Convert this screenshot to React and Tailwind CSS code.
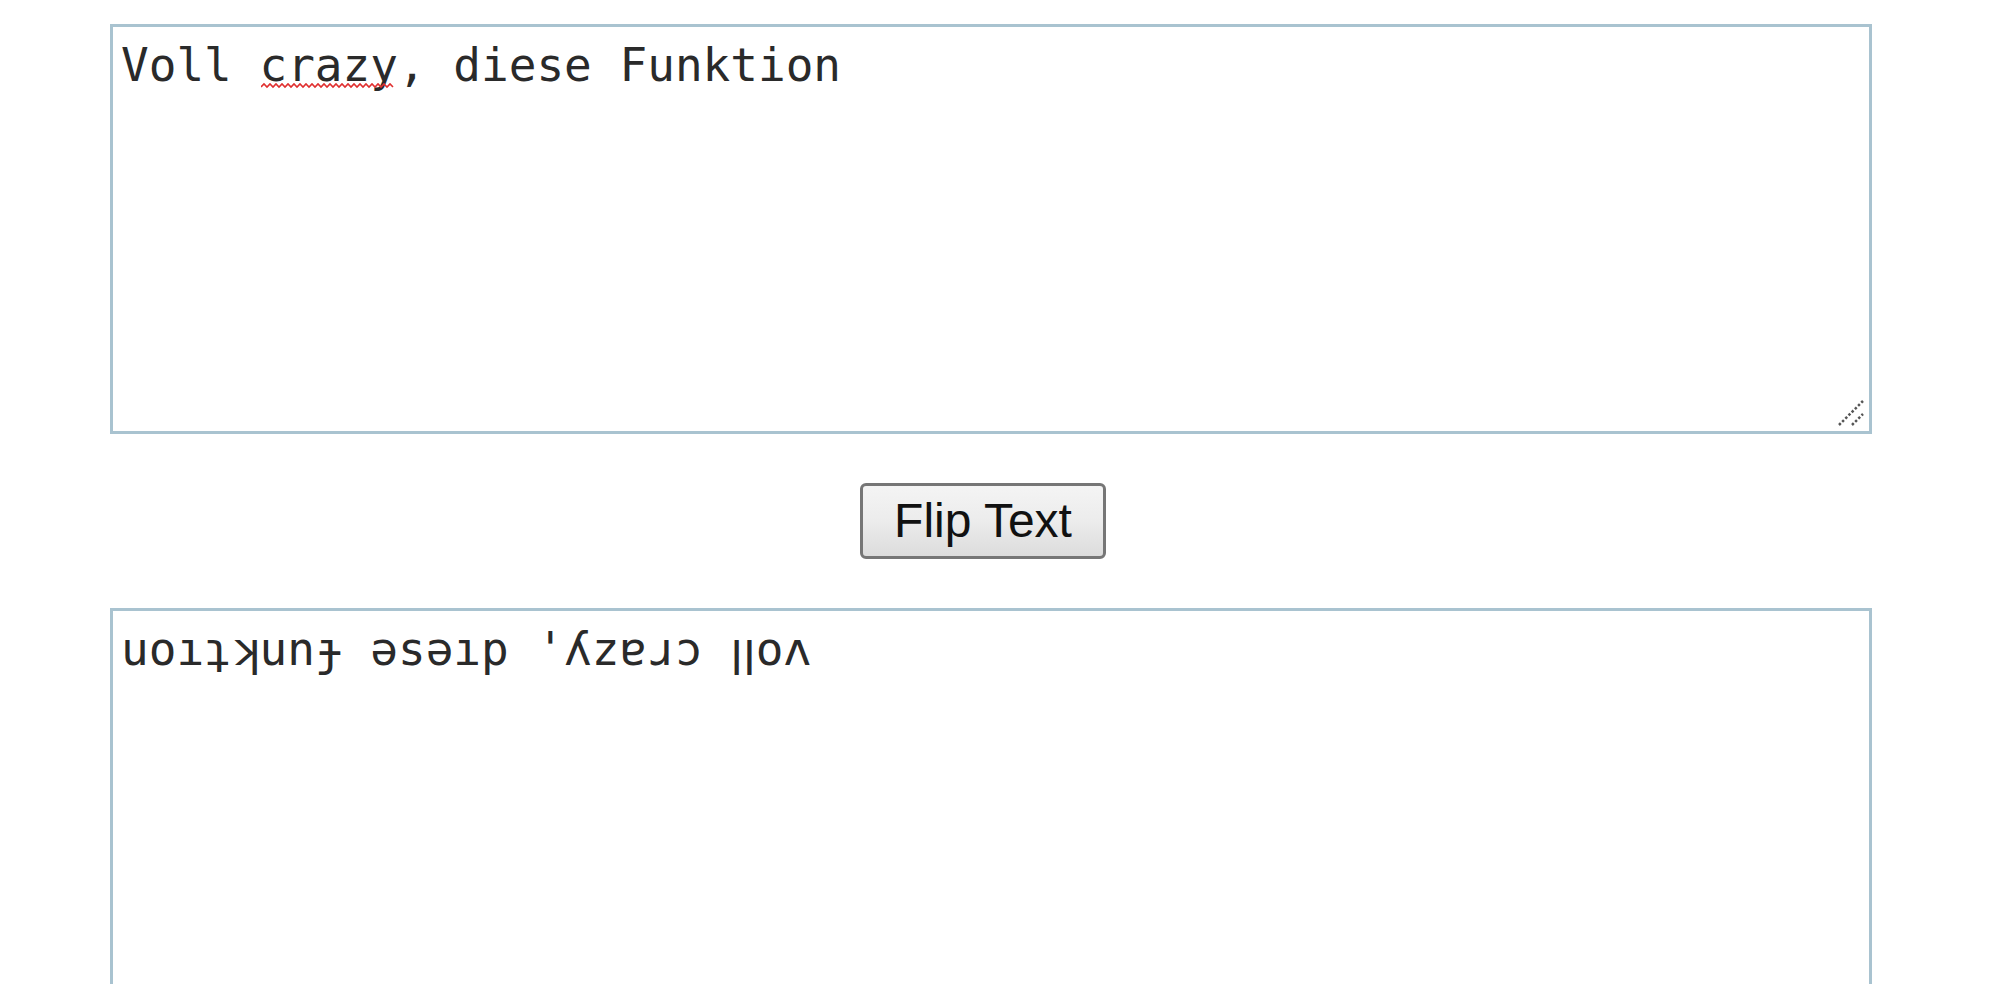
import React, { useState } from 'react';

const flipMap = {
  a: 'ɐ', b: 'q', c: 'ɔ', d: 'p', e: 'ǝ', f: 'ɟ', g: 'ƃ', h: 'ɥ', i: 'ı', j: 'ɾ',
  k: 'ʞ', l: 'ꞁ', m: 'ɯ', n: 'u', o: 'o', p: 'd', q: 'b', r: 'ɹ', s: 's', t: 'ʇ',
  u: 'n', v: 'ʌ', w: 'ʍ', x: 'x', y: 'ʎ', z: 'z', ',': "'", "'": ',', '.': '˙',
  '?': '¿', '!': '¡', '(': ')', ')': '(', '[': ']', ']': '[', '{': '}', '}': '{',
};

const flip = (text) =>
  text
    .toLowerCase()
    .split('')
    .reverse()
    .map((ch) => flipMap[ch] || ch)
    .join('');

// big dotted resize grip, like a zoomed-in browser draws it
const Grip = () => (
  <svg className="absolute right-[6px] bottom-[6px] pointer-events-none" width="30" height="30" viewBox="0 0 30 30">
    <line x1="3" y1="27" x2="27" y2="3" stroke="#555" strokeWidth="2.5" strokeDasharray="2.5 2" />
    <line x1="16" y1="27" x2="27" y2="16" stroke="#555" strokeWidth="2.5" strokeDasharray="2.5 2" />
  </svg>
);

// red spell-check squiggle under "crazy"
const Squiggle = () => (
  <svg className="absolute left-[151px] top-[58px] pointer-events-none" width="136" height="8" viewBox="0 0 136 8">
    <path
      d="M0 5 l3 -3 l3 3 l3 -3 l3 3 l3 -3 l3 3 l3 -3 l3 3 l3 -3 l3 3 l3 -3 l3 3 l3 -3 l3 3 l3 -3 l3 3 l3 -3 l3 3 l3 -3 l3 3 l3 -3 l3 3 l3 -3 l3 3 l3 -3 l3 3 l3 -3 l3 3 l3 -3 l3 3 l3 -3 l3 3 l3 -3 l3 3 l3 -3 l3 3 l3 -3 l3 3 l3 -3 l3 3 l3 -3 l3 3 l3 -3 l3 3"
      fill="none"
      stroke="#e03030"
      strokeWidth="1.6"
    />
  </svg>
);

const App = () => {
  const [input, setInput] = useState('Voll crazy, diese Funktion');
  const [output, setOutput] = useState(flip('Voll crazy, diese Funktion'));

  return (
    <div className="min-h-screen bg-white pt-[24px] pl-[110px]">
      {/* Input */}
      <div className="relative w-[1762px] h-[410px]">
        <textarea
          value={input}
          onChange={(e) => setInput(e.target.value)}
          spellCheck={false}
          className="block w-full h-full resize-none border-[3px] border-[#a9c3d0] bg-white px-[8px] py-[12px] font-['DejaVu_Sans_Mono','Liberation_Mono',monospace] text-[46px] leading-[1.16] text-[#2a2a2a] outline-none"
        />
        {input === 'Voll crazy, diese Funktion' && <Squiggle />}
        <Grip />
      </div>

      {/* Button */}
      <div className="w-[1762px] flex justify-center pr-[16px] py-[49px]">
        <button
          onClick={() => setOutput(flip(input))}
          className="h-[76px] w-[246px] border-[3px] border-[#767676] rounded-[6px] bg-gradient-to-b from-[#f4f4f4] via-[#ececec] to-[#dcdcdc] font-['Liberation_Sans',Arial,sans-serif] text-[48px] leading-none text-[#111]"
        >
          Flip Text
        </button>
      </div>

      {/* Output */}
      <textarea
        value={output}
        onChange={(e) => setOutput(e.target.value)}
        spellCheck={false}
        className="block w-[1762px] h-[410px] border-[3px] border-[#a9c3d0] bg-white px-[8px] py-[12px] font-['DejaVu_Sans_Mono','Liberation_Mono','DejaVu_Sans',monospace] text-[46px] leading-[1.16] text-[#2a2a2a] outline-none"
      />
    </div>
  );
};

export default App;
